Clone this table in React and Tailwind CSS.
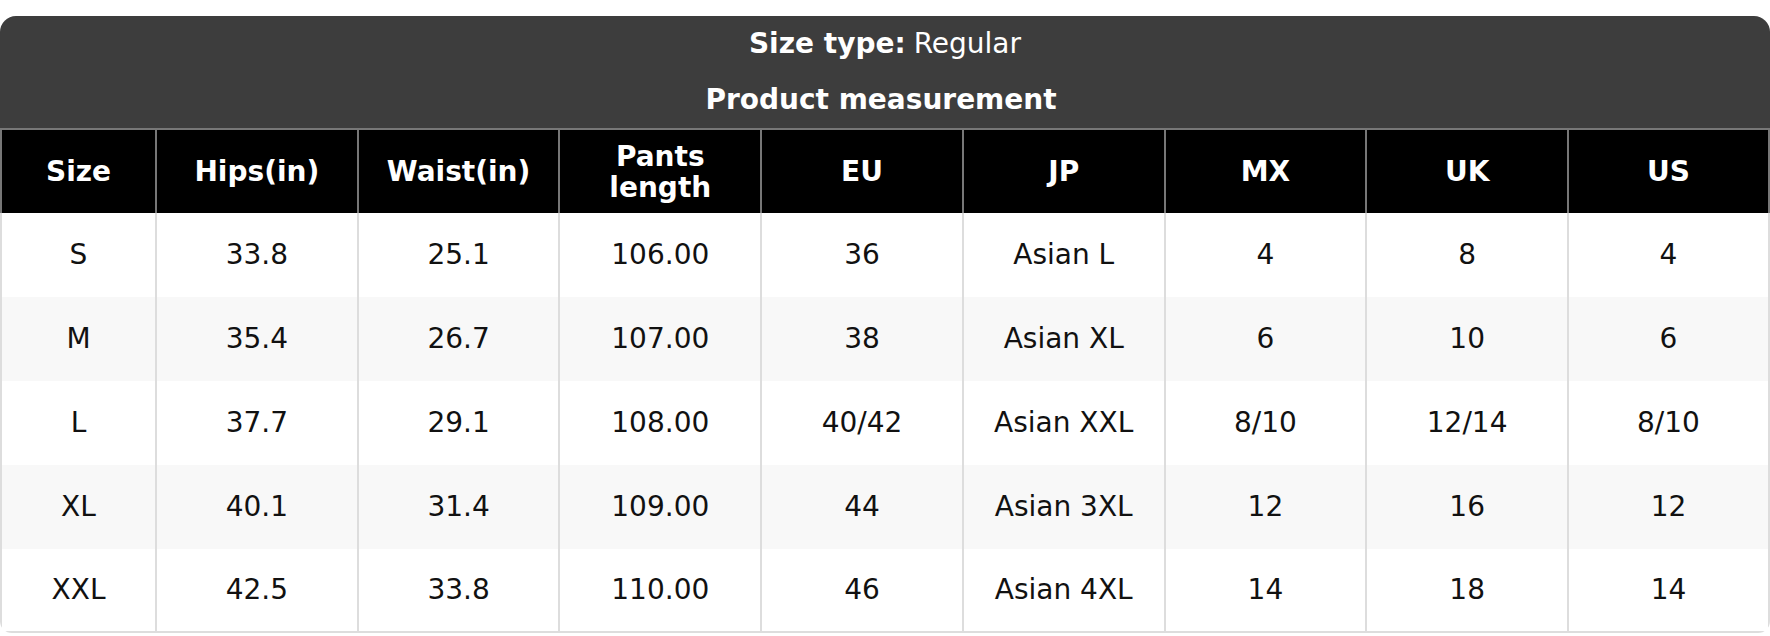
const columns = ['Size', 'Hips(in)', 'Waist(in)', 'Pants length', 'EU', 'JP', 'MX', 'UK', 'US'];

const rows = [
  ['S', '33.8', '25.1', '106.00', '36', 'Asian L', '4', '8', '4'],
  ['M', '35.4', '26.7', '107.00', '38', 'Asian XL', '6', '10', '6'],
  ['L', '37.7', '29.1', '108.00', '40/42', 'Asian XXL', '8/10', '12/14', '8/10'],
  ['XL', '40.1', '31.4', '109.00', '44', 'Asian 3XL', '12', '16', '12'],
  ['XXL', '42.5', '33.8', '110.00', '46', 'Asian 4XL', '14', '18', '14'],
];

export default function App() {
  return (
    <div className="bg-white pt-4 w-[1770px]" style={{ fontFamily: '"DejaVu Sans", Verdana, sans-serif' }}>
      <div className="rounded-t-[16px] rounded-b-[12px] overflow-hidden">
        <div className="bg-[#3d3d3d] text-white text-[28px]">
          <div className="h-[56px] flex items-center justify-center">
            <span className="font-bold">Size type:</span>
            <span className="ml-2">Regular</span>
          </div>
          <div className="h-[56px] flex items-center justify-center font-bold pr-[8px]">
            Product measurement
          </div>
        </div>

        <div className="grid grid-cols-[155px_repeat(7,minmax(0,1fr))_203px]">
          {columns.map((col, i) => (
            <div
              key={col}
              className={`h-[85px] bg-black text-white font-bold text-[28px] leading-[31px] text-center flex items-center justify-center border-l-2 border-t-2 border-[#777] ${i === columns.length - 1 ? 'border-r-2' : ''}`}
            >
              {col === 'Pants length' ? (
                <span>Pants<br />length</span>
              ) : col}
            </div>
          ))}

          {rows.map((row, r) =>
            row.map((cell, i) => (
              <div
                key={`${r}-${i}`}
                className={`h-[84px] flex items-center justify-center text-[28px] text-[#111] border-l-2 border-[#ddd] ${r % 2 === 1 ? 'bg-[#f8f8f8]' : 'bg-white'} ${i === row.length - 1 ? 'border-r-2' : ''} ${r === rows.length - 1 ? 'border-b-2' : ''}`}
              >
                {cell}
              </div>
            ))
          )}
        </div>
      </div>
    </div>
  );
}
